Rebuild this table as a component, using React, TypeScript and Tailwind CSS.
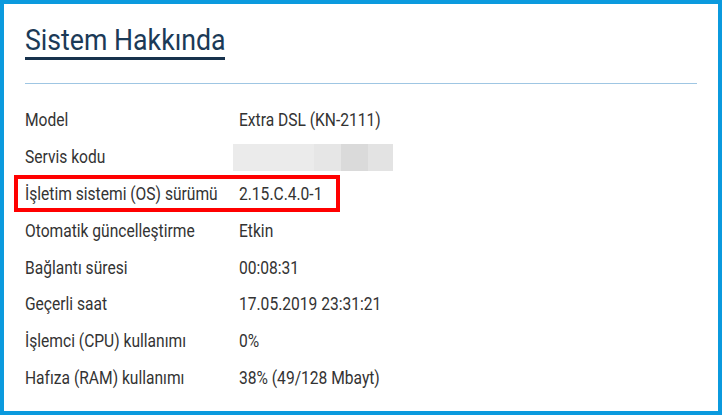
const rows: { label: string; value: string; highlight?: boolean; masked?: boolean }[] = [
  { label: "Model", value: "Extra DSL (KN-2111)" },
  { label: "Servis kodu", value: "", masked: true },
  { label: "İşletim sistemi (OS) sürümü", value: "2.15.C.4.0-1", highlight: true },
  { label: "Otomatik güncelleştirme", value: "Etkin" },
  { label: "Bağlantı süresi", value: "00:08:31" },
  { label: "Geçerli saat", value: "17.05.2019 23:31:21" },
  { label: "İşlemci (CPU) kullanımı", value: "0%" },
  { label: "Hafıza (RAM) kullanımı", value: "38% (49/128 Mbayt)" },
];

export default function App() {
  return (
    <div className="w-[722px] h-[415px] overflow-hidden bg-white border-4 border-[#0b9ade] font-['Roboto',sans-serif]">
      <div className="px-[21px] pt-[20px]">
        {/* heading - glyphs are narrow in the source, squeeze horizontally */}
        <h1 className="w-[200px] text-[29.5px] leading-[32px] text-[#1b3a57] border-b-[3px] border-[#17324d] pb-[1px]">
          <span className="inline-block origin-left scale-x-[0.905] whitespace-nowrap">Sistem Hakkında</span>
        </h1>
        <div className="mt-[23px] h-px bg-[#9fc6e3]" />

        <div className="mt-[18px] flex flex-col">
          {rows.map((r) => (
            <div key={r.label} className="relative flex items-center h-[36.85px] text-[19px] text-[#333]">
              {r.highlight && (
                <div className="absolute left-[-11px] top-[-1px] w-[326px] h-[37px] border-4 border-[#ff0000]" />
              )}
              <div className="w-[214px] shrink-0">
                <span className="inline-block origin-left scale-x-[0.82] whitespace-nowrap">{r.label}</span>
              </div>
              {r.masked ? (
                <div className="flex h-[27px] ml-[-6px]">
                  <div className="w-[81px] bg-[#ebebeb]" />
                  <div className="w-[27px] bg-[#e6e6e6]" />
                  <div className="w-[27px] bg-[#dadada]" />
                  <div className="w-[25px] bg-[#e3e3e3]" />
                </div>
              ) : (
                <span className="inline-block origin-left scale-x-[0.82] whitespace-nowrap">{r.value}</span>
              )}
            </div>
          ))}
        </div>
      </div>
    </div>
  );
}
